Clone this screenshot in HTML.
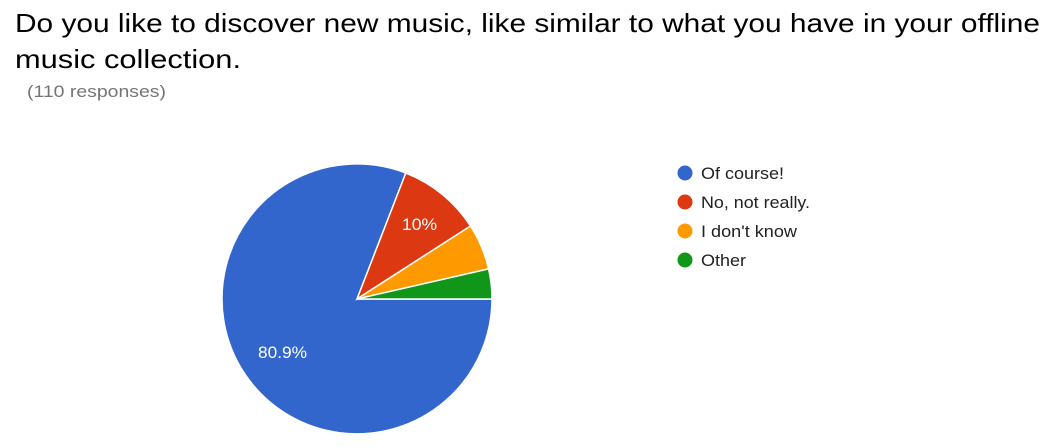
<!DOCTYPE html>
<html><head><meta charset="utf-8"><style>
html,body{margin:0;padding:0;background:#fff;width:1052px;height:448px;overflow:hidden}
svg{display:block;font-family:"Liberation Sans",Arial,sans-serif}
</style></head><body>
<svg width="1052" height="448" viewBox="0 0 1052 448">
<text x="15" y="32" font-size="26" fill="#000" textLength="1025" lengthAdjust="spacingAndGlyphs">Do you like to discover new music, like similar to what you have in your offline</text>
<text x="15" y="68" font-size="26" fill="#000" textLength="226" lengthAdjust="spacingAndGlyphs">music collection.</text>
<text x="27" y="97" font-size="17" fill="#757575" textLength="139" lengthAdjust="spacingAndGlyphs">(110 responses)</text>
<g stroke="#fff" stroke-width="1.5">
<path d="M357,299 L492,299 A135,135 0 1,1 405.8,173 Z" fill="#3366cc"/>
<path d="M357,299 L405.8,173 A135,135 0 0,1 470.5,226 Z" fill="#dc3912"/>
<path d="M357,299 L470.5,226 A135,135 0 0,1 488.6,268.9 Z" fill="#ff9900"/>
<path d="M357,299 L488.6,268.9 A135,135 0 0,1 492,299 Z" fill="#109618"/>
</g>
<text x="258" y="358" font-size="17" fill="#fff" textLength="49" lengthAdjust="spacingAndGlyphs">80.9%</text>
<text x="402" y="230" font-size="17" fill="#fff" textLength="35" lengthAdjust="spacingAndGlyphs">10%</text>
<g font-size="17" fill="#222">
<circle cx="685" cy="173" r="7.5" fill="#3366cc"/><text x="701" y="179" textLength="83" lengthAdjust="spacingAndGlyphs">Of course!</text>
<circle cx="685" cy="202" r="7.5" fill="#dc3912"/><text x="701" y="208" textLength="109" lengthAdjust="spacingAndGlyphs">No, not really.</text>
<circle cx="685" cy="231" r="7.5" fill="#ff9900"/><text x="701" y="237" textLength="96" lengthAdjust="spacingAndGlyphs">I don't know</text>
<circle cx="685" cy="260" r="7.5" fill="#109618"/><text x="701" y="266" textLength="45" lengthAdjust="spacingAndGlyphs">Other</text>
</g>
</svg>
</body></html>
